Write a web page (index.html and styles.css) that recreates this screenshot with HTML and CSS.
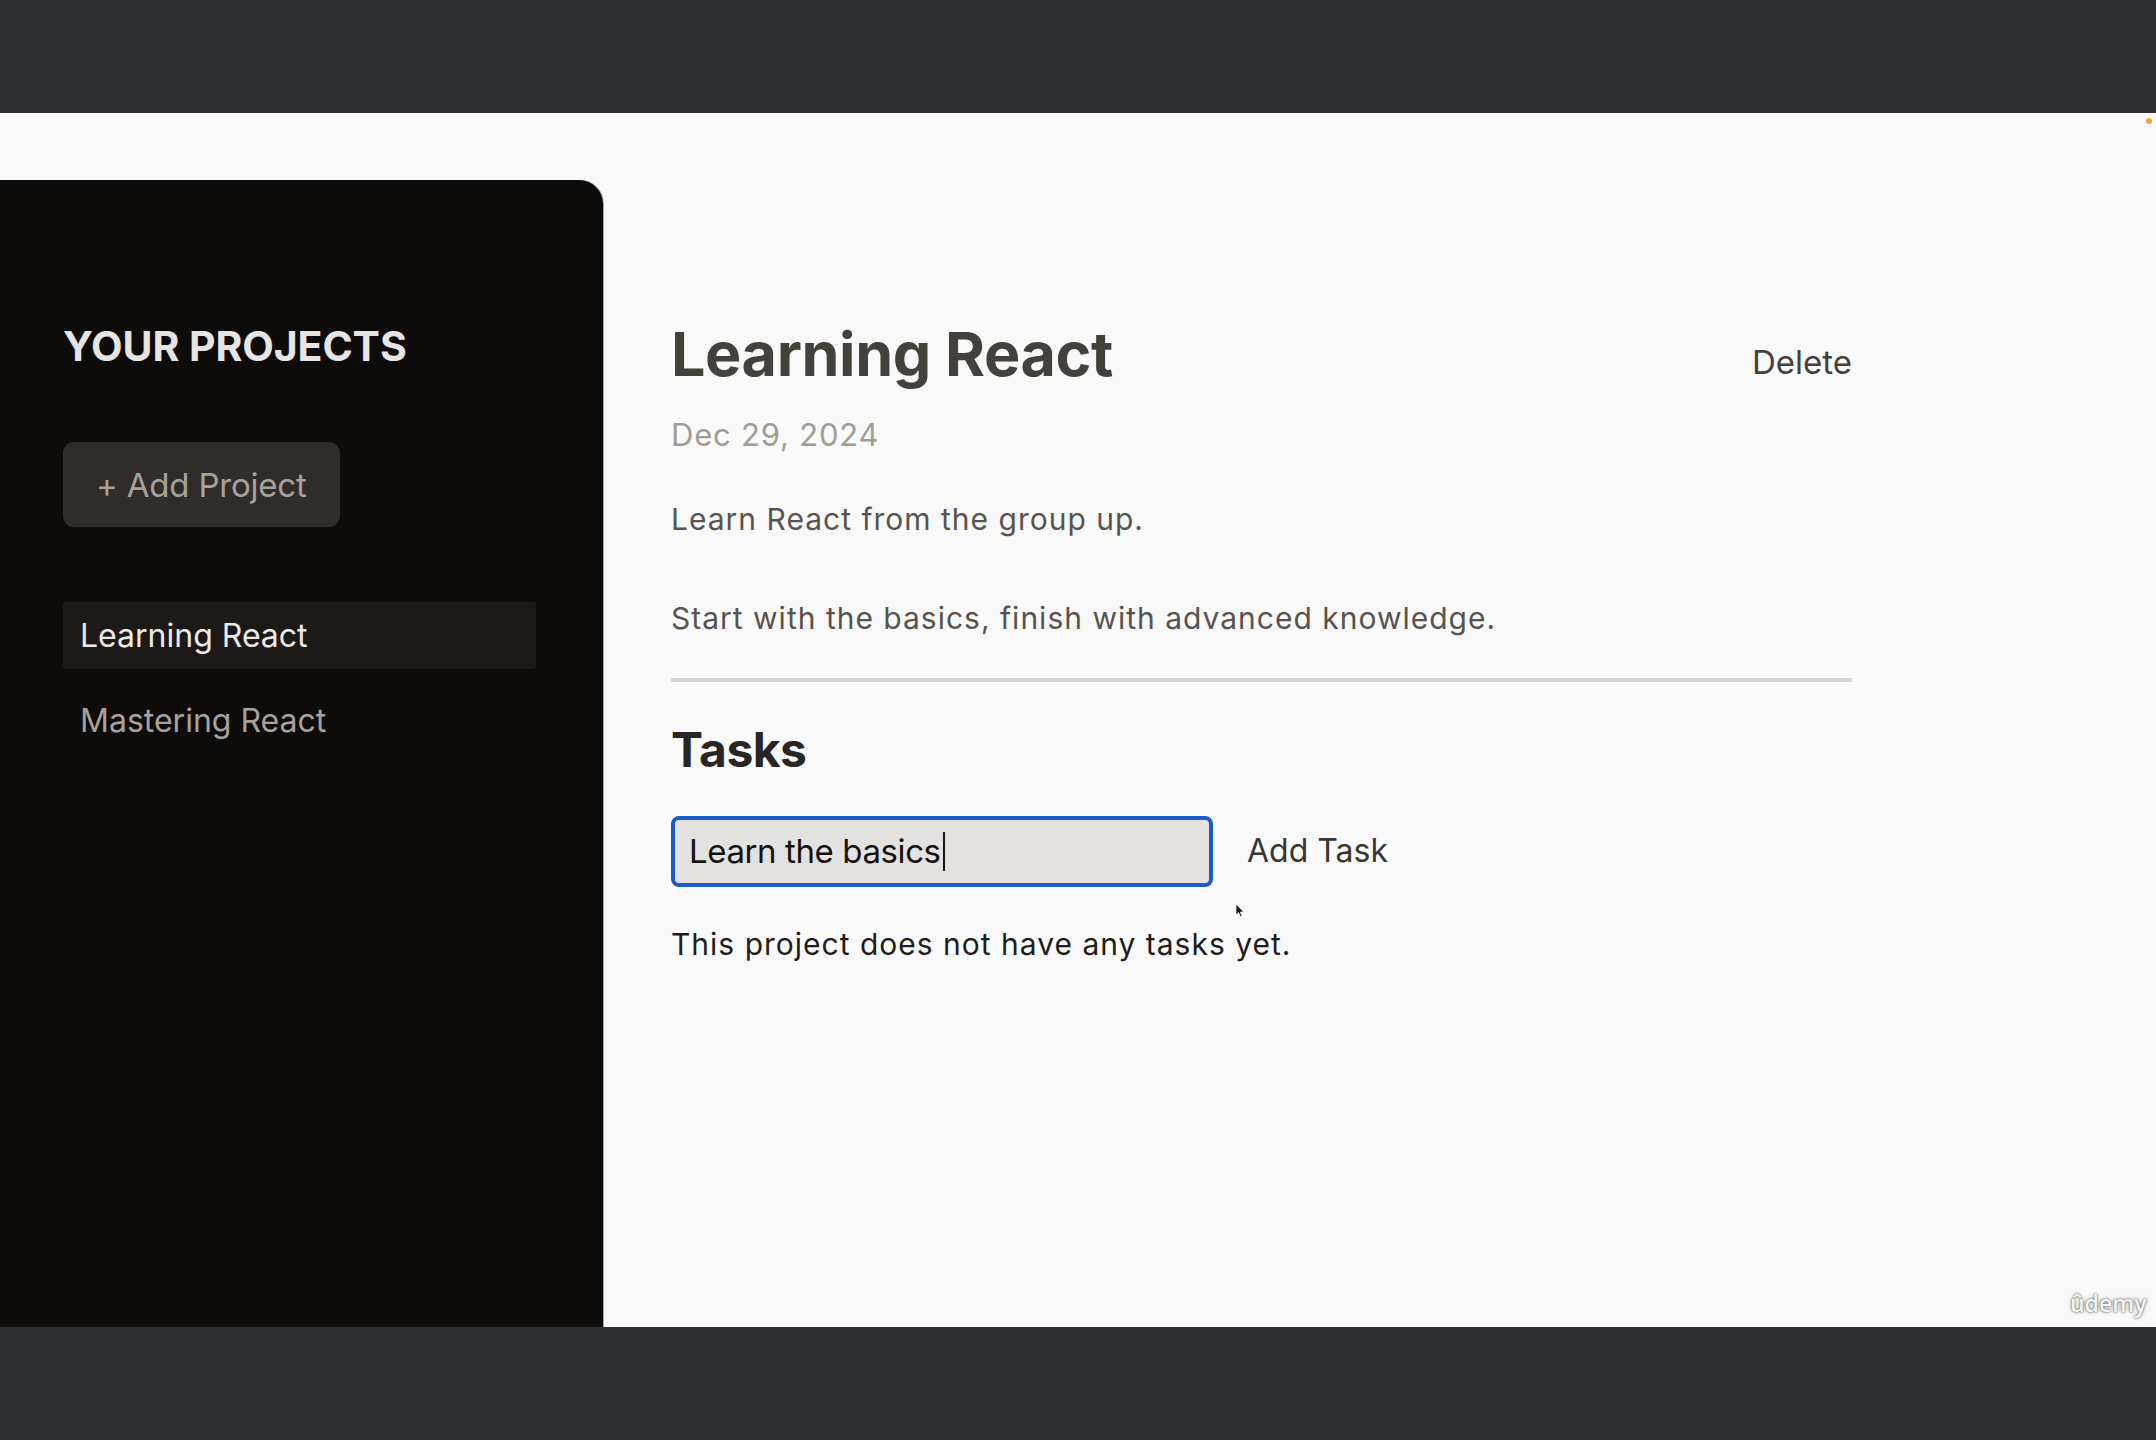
FILE: index.html
```html
<!DOCTYPE html>
<html lang="en">
<head>
<meta charset="utf-8">
<title>Project Manager</title>
<link rel="stylesheet" href="styles.css">
</head>
<body>
<div class="frame-bar"></div>
<div class="screen">
  <div class="app">
    <aside class="sidebar">
      <h2 class="sidebar-title">YOUR PROJECTS</h2>
      <button class="add-project">+ Add Project</button>
      <ul class="project-list">
        <li class="project-item active">Learning React</li>
        <li class="project-item">Mastering React</li>
      </ul>
    </aside>
    <main class="content">
      <section class="project-header">
        <div class="title-row">
          <h1 class="project-title">Learning React</h1>
          <button class="delete-btn">Delete</button>
        </div>
        <p class="project-date">Dec 29, 2024</p>
        <p class="project-desc">Learn React from the group up.

Start with the basics, finish with advanced knowledge.</p>
      </section>
      <section class="tasks">
        <h2 class="tasks-title">Tasks</h2>
        <div class="task-form">
          <div class="task-input" role="textbox"><span>Learn the basics</span><span class="caret"></span></div>
          <button class="add-task">Add Task</button>
        </div>
        <p class="no-tasks">This project does not have any tasks yet.</p>
      </section>
    </main>
  </div>
  <svg class="cursor" width="10" height="15" viewBox="0 0 10 15"><path d="M1 1 L1 12 L3.6 9.6 L5.6 14 L7.2 13.3 L5.3 9 L8.8 9 Z" fill="#111" stroke="#fff" stroke-width="0.8"/></svg>
  <span class="rec-dot"></span>
  <span class="watermark">ûdemy</span>
</div>
<div class="frame-bar bottom"></div>
</body>
</html>
```

FILE: styles.css
```css
* { box-sizing: border-box; }
html, body { margin: 0; padding: 0; }
body {
  width: 2156px;
  height: 1440px;
  overflow: hidden;
  background: #2f3032;
  font-family: Inter, "Noto Sans", sans-serif;
}
.frame-bar {
  height: 113px;
  background: #2f3032;
}
.frame-bar.bottom { height: 113px; }
.screen {
  position: relative;
  height: 1214px;
  background: #f9f9f9;
  overflow: hidden;
}
.app {
  display: flex;
  height: 100%;
  padding-top: 67px;
}
.sidebar {
  width: 603px;
  flex-shrink: 0;
  background: #0e0c0b;
  border-top-right-radius: 24px;
  padding: 141px 67px 0 63px;
  box-shadow: 1px 0 0 rgba(130, 128, 126, 0.7);
}
.sidebar-title {
  margin: 0;
  font-size: 41px;
  line-height: 50px;
  font-weight: 700;
  color: #e7e5e4;
  letter-spacing: -0.1px;
}
.add-project {
  margin-top: 71px;
  height: 85px;
  padding: 0 33px;
  border: none;
  border-radius: 11px;
  background: #2f2c2a;
  color: #a8a29e;
  font-family: inherit;
  font-size: 33px;
  line-height: 40px;
  letter-spacing: -0.2px;
  display: flex;
  align-items: center;
}
.project-list {
  list-style: none;
  margin: 75px 0 0;
  padding: 0;
  display: flex;
  flex-direction: column;
  gap: 18px;
}
.project-item {
  height: 67px;
  display: flex;
  align-items: center;
  padding-left: 17px;
  font-size: 32px;
  line-height: 40px;
  color: #a8a29e;
  border-radius: 3px;
}
.project-item.active {
  background: #1c1918;
  color: #ece9e7;
}
.content {
  width: 1249px;
  padding: 138px 0 0 68px;
}
.project-header {
  padding-bottom: 34px;
  border-bottom: 4px solid #d6d3d1;
}
.title-row {
  display: flex;
  justify-content: space-between;
  align-items: flex-start;
}
.project-title {
  margin: 0;
  font-size: 61px;
  line-height: 72px;
  font-weight: 700;
  color: #44403c;
  letter-spacing: -0.4px;
}
.delete-btn {
  margin-top: 24px;
  padding: 0;
  border: none;
  background: none;
  font-family: inherit;
  font-size: 33px;
  line-height: 40px;
  color: #44403c;
}
.project-date {
  margin: 26px 0 0;
  font-size: 31px;
  line-height: 38px;
  color: #a19c98;
  letter-spacing: 0.8px;
}
.project-desc {
  margin: 41px 0 0;
  font-size: 30px;
  line-height: 49.6px;
  color: #57534e;
  letter-spacing: 1px;
  white-space: pre-wrap;
}
.tasks-title {
  margin: 39px 0 0;
  font-size: 48px;
  line-height: 58px;
  font-weight: 700;
  color: #292524;
  letter-spacing: -0.5px;
}
.task-form {
  margin-top: 37px;
  display: flex;
  align-items: center;
  gap: 34px;
}
.task-input {
  width: 542px;
  height: 71px;
  border: 4px solid #1b5bc9;
  border-radius: 8px;
  background: #e4e2e0;
  padding-left: 14px;
  display: flex;
  align-items: center;
  font-size: 33px;
  line-height: 40px;
  color: #141211;
  letter-spacing: -0.4px;
}
.caret {
  width: 2px;
  height: 39px;
  background: #141211;
  margin-left: 2px;
}
.add-task {
  padding: 0;
  border: none;
  background: none;
  font-family: inherit;
  font-size: 32px;
  line-height: 40px;
  color: #3a3634;
}
.no-tasks {
  margin: 39px 0 0;
  font-size: 30px;
  line-height: 36px;
  color: #1f1c1a;
  letter-spacing: 1px;
}
.cursor {
  position: absolute;
  left: 1235px;
  top: 790px;
}
.rec-dot {
  position: absolute;
  left: 2146px;
  top: 5px;
  width: 6px;
  height: 6px;
  border-radius: 50%;
  background: #f0a240;
}
.watermark {
  position: absolute;
  left: 2070px;
  top: 1175px;
  font-family: "Open Sans", sans-serif;
  font-size: 23px;
  font-weight: 600;
  line-height: 30px;
  color: #f6f6f6;
  text-shadow: 0 0 2px rgba(0, 0, 0, 0.7), 0 0 4px rgba(0, 0, 0, 0.3);
}
```
